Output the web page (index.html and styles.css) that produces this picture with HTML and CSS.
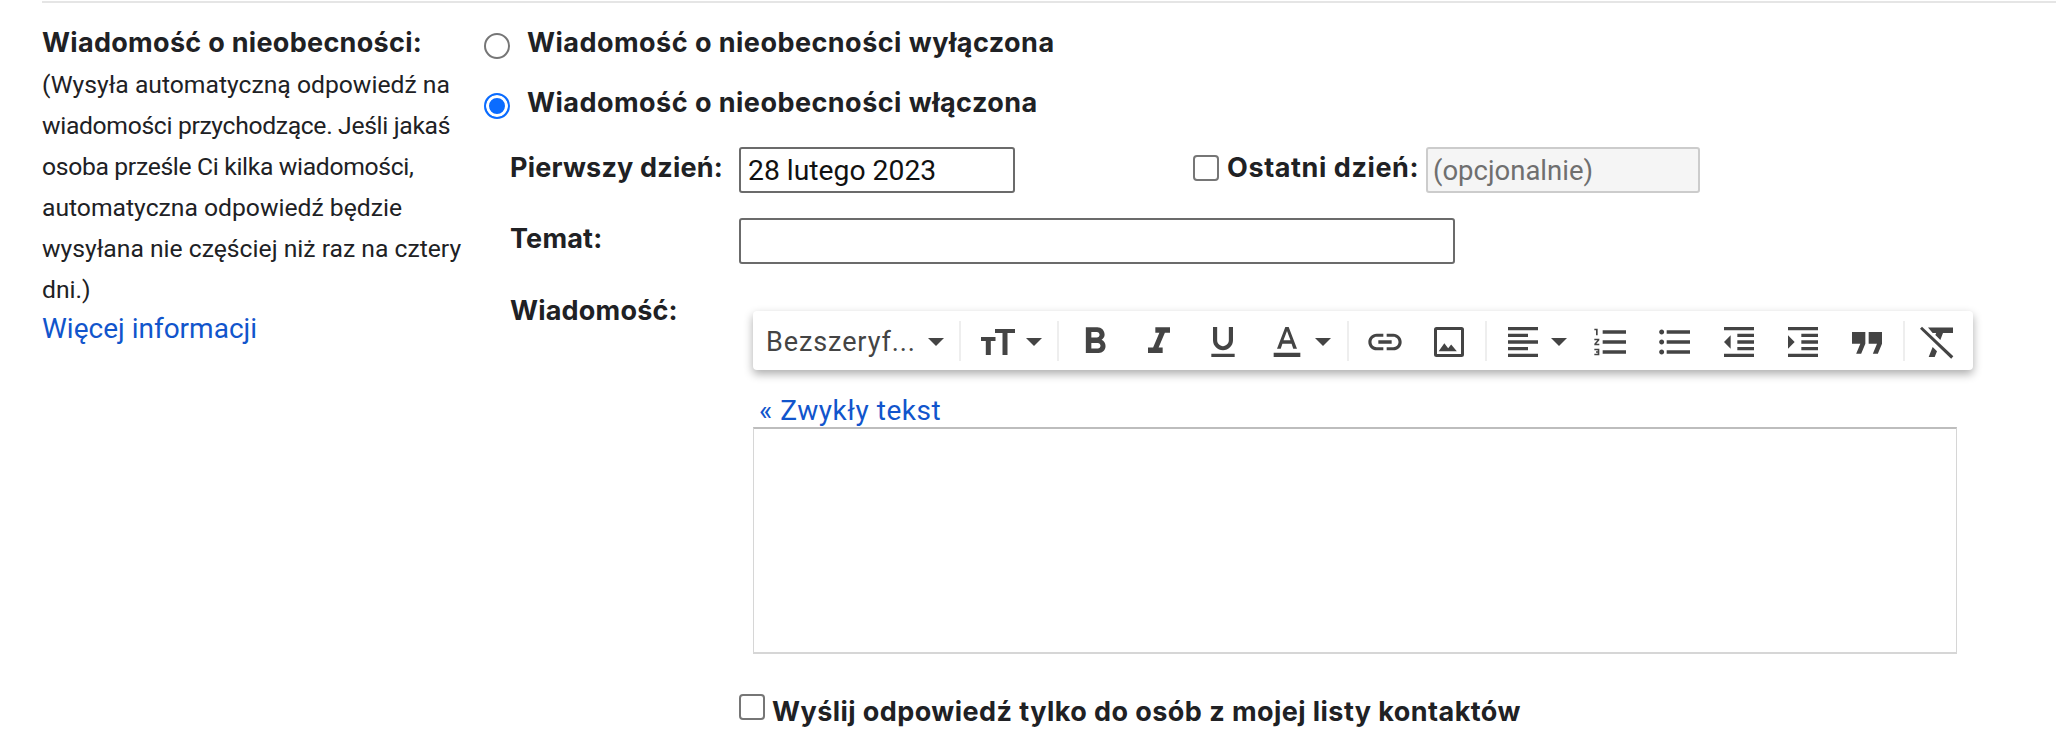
FILE: index.html
```html
<!DOCTYPE html>
<html lang="pl">
<head>
<meta charset="utf-8">
<title>Wiadomość o nieobecności</title>
<link rel="stylesheet" href="styles.css">
</head>
<body>
<div class="rule"></div>
<main class="main">
  <aside class="side">
    <div class="title">Wiadomość o nieobecności:</div>
    <p class="desc">(Wysyła automatyczną odpowiedź na <span class="tight">wiadomości przychodzące. Jeśli jakaś osoba prześle Ci kilka wiadomości,</span> automatyczna odpowiedź będzie wysyłana nie częściej niż raz na cztery dni.)</p>
    <a class="link" href="#">Więcej informacji</a>
  </aside>
  <section class="content">
    <label class="radio-row"><input class="radio" type="radio" name="v"><span class="strong">Wiadomość o nieobecności wyłączona</span></label>
    <label class="radio-row second"><input class="radio" type="radio" name="v" checked><span class="strong">Wiadomość o nieobecności włączona</span></label>
    <div class="form">
      <div class="row date-row">
        <div class="label strong">Pierwszy dzień:</div>
        <input class="input date" type="text" value="28 lutego 2023">
        <label class="last"><input class="check" type="checkbox"><span class="strong">Ostatni dzień:</span></label>
        <input class="input optional" type="text" placeholder="(opcjonalnie)" disabled>
      </div>
      <div class="row subject-row">
        <div class="label strong">Temat:</div>
        <input class="input subject" type="text">
      </div>
      <div class="row message-row">
        <div class="label strong">Wiadomość:</div>
        <div class="editor">
          <div class="toolbar">
            <div class="tool font"><span class="font-name">Bezszeryf...</span><svg class="caret" viewBox="0 0 16 8"><path d="M0 0h16L8 8z"/></svg></div>
            <i class="sep"></i>
            <div class="tool size"><svg class="ico wide" viewBox="0 0 34 26"><path d="M14 0h20v4h-7.500v22h-5V4H14zM0 8h14.500v4H9.800v14H4.800V12H0z"/></svg><svg class="caret" viewBox="0 0 16 8"><path d="M0 0h16L8 8z"/></svg></div>
            <i class="sep m-r"></i>
            <div class="tool"><svg class="ico big" viewBox="0 0 24 24"><path d="M15.600 10.790c.97-.67 1.650-1.770 1.650-2.790 0-2.260-1.750-4-4-4H7v14h7.040c2.090 0 3.710-1.700 3.710-3.790 0-1.520-.86-2.820-2.150-3.420zM10 6.500h3c.83 0 1.500.67 1.500 1.500s-.67 1.500-1.500 1.500h-3v-3zm3.500 9H10v-3h3.500c.83 0 1.500.67 1.500 1.500s-.67 1.500-1.500 1.500z"/></svg></div>
            <div class="tool"><svg class="ico big" viewBox="0 0 24 24"><path d="M10 4v3h2.210l-3.420 8H6v3h8v-3h-2.210l3.420-8H18V4z"/></svg></div>
            <div class="tool"><svg class="ico" viewBox="0 0 24 24"><path d="M12 17c3.310 0 6-2.690 6-6V3h-2.500v8c0 1.930-1.570 3.500-3.500 3.500S8.500 12.930 8.500 11V3H6v8c0 3.310 2.690 6 6 6zm-7 2v2h14v-2H5z"/></svg></div>
            <div class="tool color"><svg class="ico" viewBox="0 0 24 24"><path d="M11 3 6 16h2.250l1-3h5.500l1 3H18L13 3h-2zm-1.100 8L12 5.400 14.100 11H9.900zM4 18.500h16V21H4z"/></svg><svg class="caret" viewBox="0 0 16 8"><path d="M0 0h16L8 8z"/></svg></div>
            <i class="sep m-r"></i>
            <div class="tool"><svg class="ico" viewBox="0 0 24 24"><path d="M3.900 12c0-1.710 1.390-3.100 3.100-3.100h4V7H7c-2.760 0-5 2.240-5 5s2.240 5 5 5h4v-1.900H7c-1.710 0-3.100-1.390-3.100-3.100zM8 13h8v-2H8v2zm9-6h-4v1.900h4c1.710 0 3.100 1.390 3.100 3.100s-1.390 3.100-3.100 3.100h-4V17h4c2.760 0 5-2.240 5-5s-2.240-5-5-5z"/></svg></div>
            <div class="tool"><svg class="ico" viewBox="0 0 24 24"><path fill-rule="evenodd" d="M4.500 3h15A1.500 1.500 0 0 1 21 4.500v15a1.500 1.500 0 0 1-1.500 1.500h-15A1.500 1.500 0 0 1 3 19.500v-15A1.500 1.500 0 0 1 4.500 3zm.300 1.800v14.400h14.400V4.800H4.800zm1 12.700 3.400-4.800 2.300 3 1.800-2.200 3.400 4z"/></svg></div>
            <i class="sep m-l m-r"></i>
            <div class="tool align"><svg class="ico" viewBox="0 0 24 24"><path d="M15 15H3v2h12v-2zm0-8H3v2h12V7zM3 13h18v-2H3v2zm0 8h18v-2H3v2zM3 3v2h18V3H3z"/></svg><svg class="caret" viewBox="0 0 16 8"><path d="M0 0h16L8 8z"/></svg></div>
            <div class="tool"><svg class="ico" viewBox="0 0 24 24"><path d="M2 17h2v.5H3v1h1v.5H2v1h3v-4H2v1zm1-9h1V4H2v1h1v3zm-1 3h1.800L2 13.100v.9h3v-1H3.200L5 10.900V10H2v1zm5-6v2h14V5H7zm0 14h14v-2H7v2zm0-6h14v-2H7v2z"/></svg></div>
            <div class="tool"><svg class="ico" viewBox="0 0 24 24"><path d="M4 10.500c-.83 0-1.500.67-1.500 1.500s.67 1.500 1.500 1.500 1.500-.67 1.500-1.500-.67-1.500-1.500-1.500zm0-6c-.83 0-1.500.67-1.500 1.500S3.170 7.500 4 7.500 5.500 6.830 5.500 6 4.830 4.500 4 4.500zm0 12c-.83 0-1.500.68-1.500 1.500s.68 1.500 1.500 1.500 1.500-.68 1.500-1.500-.67-1.500-1.500-1.500zM7 19h14v-2H7v2zm0-6h14v-2H7v2zm0-8v2h14V5H7z"/></svg></div>
            <div class="tool"><svg class="ico" viewBox="0 0 24 24"><path d="M11 17h10v-2H11v2zm-8-5 4 4V8l-4 4zm0 9h18v-2H3v2zM3 3v2h18V3H3zm8 6h10V7H11v2zm0 4h10v-2H11v2z"/></svg></div>
            <div class="tool"><svg class="ico" viewBox="0 0 24 24"><path d="M3 21h18v-2H3v2zM3 8v8l4-4-4-4zm8 9h10v-2H11v2zM3 3v2h18V3H3zm8 6h10V7H11v2zm0 4h10v-2H11v2z"/></svg></div>
            <div class="tool"><svg class="ico" viewBox="0 0 24 24"><path d="M3 6h8v7l-2.500 6h-3L8 13H3zm10 0h8v7l-2.500 6h-3l2.500-6h-5z"/></svg></div>
            <i class="sep m-l"></i>
            <div class="tool"><svg class="ico" viewBox="0 0 24 24"><path d="M6.600 3.300h15v3.300h-6l-1.600 4.200-3-3 .5-1.200H9.400zM9.400 15l2.600 2.600-1.400 3.400H7z"/><path d="M3 2.800 21.800 20.600 20.500 22 1.800 4z"/></svg></div>
          </div>
          <a class="plain" href="#">« Zwykły tekst</a>
          <div class="body-box"></div>
          <label class="contacts"><input class="check" type="checkbox"><span class="strong">Wyślij odpowiedź tylko do osób z mojej listy kontaktów</span></label>
        </div>
      </div>
    </div>
  </section>
</main>
</body>
</html>
```

FILE: styles.css
```css
* { box-sizing: border-box; }
html, body { margin: 0; background: #fff; }
body {
  height: 748px;
  overflow: hidden;
  font-family: Roboto, "Liberation Sans", sans-serif;
  font-size: 24px;
  color: #202124;
}
.rule { height: 2px; margin: 1px 0 0 42px; background: #e5e5e5; }
.main { display: flex; padding: 20px 0 0 42px; }
.side { width: 442px; flex: none; line-height: 41px; }
.strong, .title { font-family: Inter, Roboto, sans-serif; font-size: 27px; font-weight: 700; letter-spacing: .2px; white-space: nowrap; }
.title { margin-top: -1px; margin-bottom: 1px; letter-spacing: .3px; }
.desc { margin: 0; width: 425px; font-size: 24.7px; }
.tight { letter-spacing: -.33px; }
.link { display: block; margin-top: -2px; color: #1155cc; text-decoration: none; font-size: 28px; }
.content { flex: 1; min-width: 0; }
.radio-row { display: flex; align-items: center; height: 41px; margin-bottom: 19px; }
.radio-row.second { margin-bottom: 23px; }
.radio-row .strong { margin-top: -2px; letter-spacing: .47px; }
.radio {
  appearance: none;
  width: 26px;
  height: 26px;
  margin: 4px 17px 0 0;
  border: 2px solid #767676;
  border-radius: 50%;
  background: #fff;
}
.radio:checked {
  border-color: #0b6cff;
  background: #0b6cff;
  box-shadow: inset 0 0 0 3px #fff;
}
.form { padding-left: 27px; }
.row { display: flex; align-items: flex-start; }
.label { width: 229px; margin-left: -1px; flex: none; line-height: 41px; }
.date-row { margin-bottom: 25px; }
.subject-row { margin-bottom: 26px; }
.input {
  height: 46px;
  padding: 0 7px;
  border: 2px solid #6b6b6b;
  border-radius: 3px;
  font: 28.300px Roboto, "Liberation Sans", sans-serif;
  color: #111;
  background: #fff;
}
.date { width: 276px; }
.subject { width: 716px; }
.optional {
  width: 274px;
  padding-left: 5px;
  border-color: #ccc;
  background: #f5f5f5;
  font-size: 27.500px;
}
.optional::placeholder { color: #6f6f6f; opacity: 1; }
.last { display: flex; align-items: flex-start; margin-left: 178px; width: 233px; line-height: 41px; }
.last .strong { letter-spacing: .6px; }
.check {
  appearance: none;
  width: 26px;
  height: 26px;
  margin: 8px 8px 0 0;
  border: 2px solid #767676;
  border-radius: 4px;
  background: #fff;
  flex: none;
}
.editor { flex: none; width: 1240px; padding-top: 21px; }
.toolbar {
  display: flex;
  align-items: center;
  width: 1220px;
  height: 59px;
  margin-left: 14px;
  background: #fff;
  border-radius: 4px;
  box-shadow: 0 4px 10px rgba(0, 0, 0, .33);
}
.tool { display: flex; align-items: center; justify-content: center; flex: none; width: 64px; height: 59px; padding-top: 3px; }
.tool:last-child { width: 63px; }
.font { width: 206px; padding-left: 13px; justify-content: flex-start; }
.font-name { width: 162px; font-size: 27px; letter-spacing: .9px; color: #444; white-space: nowrap; }
.size { width: 96px; padding-left: 20px; justify-content: flex-start; }
.color { width: 92px; padding-left: 12px; justify-content: flex-start; }
.align { width: 88px; padding-left: 12px; justify-content: flex-start; }
.ico { width: 40px; height: 40px; fill: #444; flex: none; }
.ico.big { width: 44px; height: 44px; }
.ico.wide { width: 34px; height: 26px; }
.caret { width: 16px; height: 8px; fill: #444; flex: none; }
.size .caret { margin-left: 11px; }
.color .caret { margin-left: 8px; }
.align .caret { margin-left: 8px; margin-right: -16px; }
.sep { width: 2px; height: 40px; flex: none; background: #eee; }
.m-r { margin-right: 4px; }
.m-l { margin-left: 4px; }
.plain { display: block; margin: 25px 0 0 20px; height: 32px; line-height: 32px; font-size: 28px; color: #1155cc; text-decoration: none; letter-spacing: .55px; }
.body-box {
  width: 1204px;
  height: 227px;
  margin-left: 14px;
  border: 1px solid #d6d6d6;
  border-top: 2px solid #bdbdbd;
  border-bottom: 2px solid #d6d6d6;
}
.contacts { display: flex; align-items: flex-start; margin-top: 40px; line-height: 41px; }
.contacts .check { margin: 0 7px 0 0; }
.contacts .strong { margin-top: -3px; letter-spacing: .44px; }
```
